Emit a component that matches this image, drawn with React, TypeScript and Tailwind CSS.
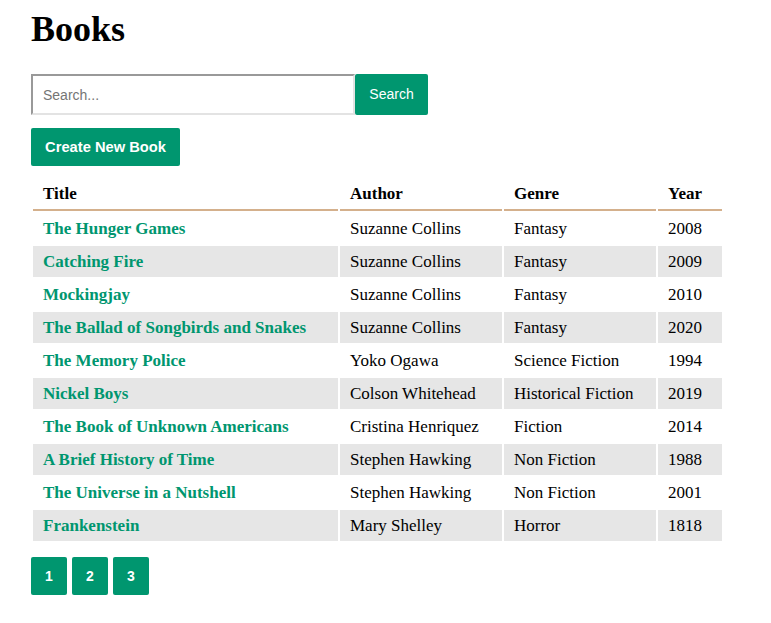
import React from "react";

const books = [
  ["The Hunger Games", "Suzanne Collins", "Fantasy", "2008"],
  ["Catching Fire", "Suzanne Collins", "Fantasy", "2009"],
  ["Mockingjay", "Suzanne Collins", "Fantasy", "2010"],
  ["The Ballad of Songbirds and Snakes", "Suzanne Collins", "Fantasy", "2020"],
  ["The Memory Police", "Yoko Ogawa", "Science Fiction", "1994"],
  ["Nickel Boys", "Colson Whitehead", "Historical Fiction", "2019"],
  ["The Book of Unknown Americans", "Cristina Henriquez", "Fiction", "2014"],
  ["A Brief History of Time", "Stephen Hawking", "Non Fiction", "1988"],
  ["The Universe in a Nutshell", "Stephen Hawking", "Non Fiction", "2001"],
  ["Frankenstein", "Mary Shelley", "Horror", "1818"],
];

export default function App() {
  return (
    <div
      className="min-h-screen bg-white px-[31px] pt-[8px] text-black"
      style={{ fontFamily: '"Liberation Serif", serif' }}
    >
      <h1 className="text-[36px] font-bold leading-[43px] m-0">Books</h1>
      <form className="mt-[23px] flex" onSubmit={(e) => e.preventDefault()}>
        <input
          type="text"
          placeholder="Search..."
          className="h-[41px] w-[324px] border-2 border-t-[#999] border-l-[#999] border-b-[#e3e3e3] border-r-[#e3e3e3] bg-white px-[10px] text-[14px] placeholder:text-[#757575] outline-none"
          style={{ fontFamily: '"Liberation Sans", Arial, sans-serif' }}
        />
        <button
          className="h-[41px] w-[73px] rounded-[2px] bg-[#00966f] text-[14px] text-white"
          style={{ fontFamily: '"Liberation Sans", Arial, sans-serif' }}
        >
          Search
        </button>
      </form>
      <button
        className="mt-[13px] h-[38px] w-[149px] rounded-[2px] bg-[#00966f] text-[14.7px] font-bold text-white"
        style={{ fontFamily: '"Liberation Sans", Arial, sans-serif' }}
      >
        Create New Book
      </button>
      <table className="mt-[11px] border-separate border-spacing-[2px] text-[17px] leading-[21px]">
        <thead>
          <tr>
            <th className="w-[305px] border-b-2 border-[#d4b08c] px-[10px] pt-[4px] pb-[5px] text-left font-bold">Title</th>
            <th className="w-[162px] border-b-2 border-[#d4b08c] px-[10px] pt-[4px] pb-[5px] text-left font-bold">Author</th>
            <th className="w-[152px] border-b-2 border-[#d4b08c] px-[10px] pt-[4px] pb-[5px] text-left font-bold">Genre</th>
            <th className="w-[64px] border-b-2 border-[#d4b08c] px-[10px] pt-[4px] pb-[5px] text-left font-bold">Year</th>
          </tr>
        </thead>
        <tbody>
          {books.map((b, i) => {
            const bg = i % 2 === 1 ? "bg-[#e6e6e6]" : "bg-white";
            return (
              <tr key={b[0]}>
                <td className={`${bg} h-[31px] px-[10px] py-[5px]`}>
                  <a href="#" className="font-bold text-[#00966f] no-underline">{b[0]}</a>
                </td>
                <td className={`${bg} h-[31px] px-[10px] py-[5px]`}>{b[1]}</td>
                <td className={`${bg} h-[31px] px-[10px] py-[5px]`}>{b[2]}</td>
                <td className={`${bg} h-[31px] px-[10px] py-[5px]`}>{b[3]}</td>
              </tr>
            );
          })}
        </tbody>
      </table>
      <div className="mt-[14px] flex gap-[5px]" style={{ fontFamily: '"Liberation Sans", Arial, sans-serif' }}>
        {["1", "2", "3"].map((p) => (
          <button key={p} className="h-[38px] w-[36px] rounded-[2px] bg-[#00966f] text-[14px] font-bold text-white">
            {p}
          </button>
        ))}
      </div>
    </div>
  );
}
